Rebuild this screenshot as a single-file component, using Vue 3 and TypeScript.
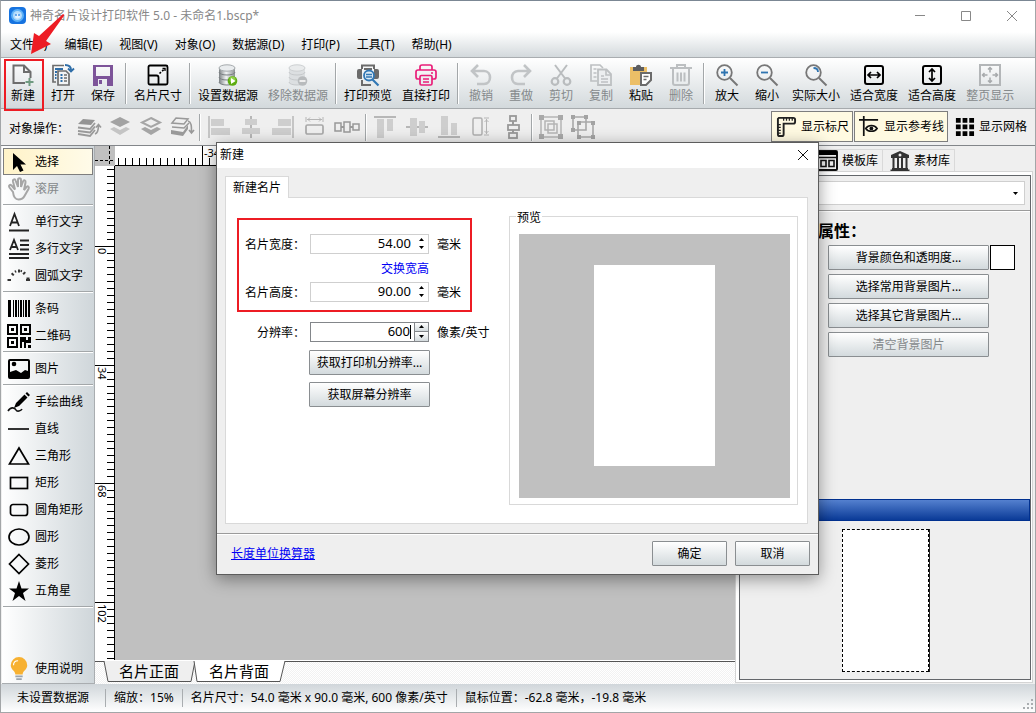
<script setup lang="ts">
import { computed, onBeforeUnmount, onMounted, ref } from 'vue'

interface Tool {
  label: string
  icon: string
  disabled?: boolean
}

const icons: Record<string, string> = {
  newDoc: '<path d="M13 19H1.500V1.500H12L18.500 8V14M12 1.500V8H18.500" fill="none" stroke="#6d6d6d" stroke-width="2"/><path d="M17.500 14v8M13.500 18h8" stroke="#6f9a80" stroke-width="2"/>',
  open: '<path d="M12 1.500H1V18h3" fill="none" stroke="#6d6d6d" stroke-width="1.700"/><path d="M3 5h8M3 8h2M3 11h1.500M3 14h1.500" stroke="#2f6ea8" stroke-width="2"/><path d="M6 7h8l3 3v11H6z" fill="#f2f4f5" stroke="#6d6d6d" stroke-width="1.700"/><path d="M8.500 11h2M8.500 14h2M8.500 17h2" stroke="#2f6ea8" stroke-width="2"/><path d="M12 11h3M12 14h3M12 17h3" stroke="#6d6d6d" stroke-width="1.500"/><path d="M13 1c4 0 6 1 6 5" fill="none" stroke="#2f6ea8" stroke-width="2"/><path d="M16 4.500l3 3 3-3" fill="none" stroke="#2f6ea8" stroke-width="1.800"/>',
  save: '<path fill-rule="evenodd" fill="#7d5499" d="M1 1h20v21H1zM4 3v9h14V3zM6 15v7h9v-7z"/><path fill="#7d5499" d="M7 16h3v4H7z"/>',
  size: '<path d="M3 1.500h16q1.500 0 1.500 1.500v16q0 1.500-1.500 1.500H3q-1.500 0-1.500-1.500V3q0-1.500 1.500-1.500zM2 11.500h7.500q2 0 2 2V20" fill="none" stroke="#000" stroke-width="1.800"/><path d="M12.500 9.500L18 4.500" stroke="#000" stroke-width="1.600" stroke-dasharray="2 1.500"/><path d="M15.500 4.500h2.500v2.500" fill="none" stroke="#000" stroke-width="1.300"/>',
  dbSet: '<defs><linearGradient id="dbg"><stop stop-color="#7b8083"/><stop offset=".45" stop-color="#f1f3f4"/><stop offset="1" stop-color="#8b9093"/></linearGradient></defs><path d="M2 4v14c0 4 16 4 16 0V4z" fill="url(#dbg)"/><path d="M2 8c0 4 16 4 16 0M2 13c0 4 16 4 16 0M2 18c0 4 16 4 16 0" fill="none" stroke="#7a8083"/><ellipse cx="10" cy="4" rx="8" ry="3.200" fill="#e9ecee" stroke="#a5aaad"/><circle cx="15.500" cy="17" r="4.800" fill="#5cac12"/><circle cx="15.500" cy="15.500" r="3" fill="#8fd048"/><path d="M14 14l4.500 3-4.500 3z" fill="#fff"/>',
  dbRemove: '<path d="M2 4v14c0 4 16 4 16 0V4z" fill="#dcdfe1"/><path d="M2 8c0 4 16 4 16 0M2 13c0 4 16 4 16 0M2 18c0 4 16 4 16 0" fill="none" stroke="#c6c9cb"/><ellipse cx="10" cy="4" rx="8" ry="3.200" fill="#e9ebec" stroke="#cdd0d2"/><circle cx="15.500" cy="17" r="4.800" fill="#b8bbbd"/><path d="M12.500 17h6" stroke="#eee" stroke-width="2"/>',
  preview: '<path d="M5 5V1.500h12V5M5 16v5h9" fill="none" stroke="#6b6b6b" stroke-width="2"/><path d="M7 5h8" stroke="#6b6b6b" stroke-width="2"/><path d="M2 5h3v10H2q-2 0-2-2V7q0-2 2-2zM17 5h3q2 0 2 2v6q0 2-2 2h-3z" fill="#6b6b6b"/><circle cx="12" cy="11.500" r="5" fill="#dcebf6" stroke="#3278b5" stroke-width="1.800"/><path d="M9 10.500h6M9 13h6" stroke="#3278b5" stroke-width="1.300"/><path d="M15.500 15.500L21.500 21.500" stroke="#3278b5" stroke-width="2.200"/>',
  print: '<path d="M5 6V3q0-2 2-2h8q2 0 2 2v3M5 15H3q-2 0-2-2V8q0-2 2-2h16q2 0 2 2v5q0 2-2 2h-2" fill="none" stroke="#e91e79" stroke-width="1.700"/><rect x="5" y="11.500" width="12" height="9.500" rx="1.500" fill="none" stroke="#e91e79" stroke-width="1.700"/><path d="M16 9h2M8 15h6M8 18h6" stroke="#e91e79" stroke-width="1.500"/>',
  undo: '<path d="M8 1L2 7l6 6M2.500 7H14c8 0 8 13 0 13H7" fill="none" stroke="#c1c4c6" stroke-width="2.600"/>',
  redo: '<path d="M14 1l6 6-6 6M19.500 7H8C0 7 0 20 8 20h7" fill="none" stroke="#c1c4c6" stroke-width="2.600"/>',
  cut: '<path d="M5 1l10.500 14M17 1L6.500 15" stroke="#b9bcbe" stroke-width="2"/><circle cx="5" cy="17.500" r="3.300" fill="none" stroke="#b9bcbe" stroke-width="2.200"/><circle cx="17" cy="17.500" r="3.300" fill="none" stroke="#b9bcbe" stroke-width="2.200"/>',
  copy: '<path d="M7 17H1V1h9l3 3M3.500 5h3M3.500 9h3M3.500 13h3" fill="none" stroke="#bdc0c2" stroke-width="1.700"/><path d="M8 5.500h8.500l4.500 4.500v11H8z" fill="#eceef0" stroke="#bdc0c2" stroke-width="1.800"/><path d="M16 6v5h5M11 12h3M11 15h7M11 18h7" fill="none" stroke="#bdc0c2" stroke-width="1.600"/>',
  paste: '<rect x="0" y="3" width="17" height="18" fill="#ecbf67"/><path d="M3 3h3c0-3 5-3 5 0h3v4H3z" fill="#5c5d60"/><path d="M11 9h10v7l-5 5h-5z" fill="#fff" stroke="#6b6b6b" stroke-width="2"/><path d="M13.500 12.500h5M13.500 15.500h3" stroke="#6b6b6b" stroke-width="1.500"/>',
  trash: '<path d="M0 4h22M7 4V1h8v3M3 5v14q0 2 2 2h12q2 0 2-2V5" fill="none" stroke="#bcbfc1" stroke-width="2"/><path d="M7.500 8.500v9M11 8.500v9M14.500 8.500v9" stroke="#bcbfc1" stroke-width="2"/>',
  zoomIn: '<circle cx="8.500" cy="8.500" r="7.300" fill="none" stroke="#777" stroke-width="1.800"/><path d="M14 14l7.500 7.500" stroke="#777" stroke-width="2"/><path d="M8.500 5v7M5 8.500h7" stroke="#2f74b0" stroke-width="1.800"/>',
  zoomOut: '<circle cx="8.500" cy="8.500" r="7.300" fill="none" stroke="#777" stroke-width="1.800"/><path d="M14 14l7.500 7.500" stroke="#777" stroke-width="2"/><path d="M5 8.500h7" stroke="#2f74b0" stroke-width="1.800"/>',
  actual: '<circle cx="8.500" cy="8.500" r="7.300" fill="none" stroke="#777" stroke-width="1.800"/><path d="M14 14l7.500 7.500" stroke="#777" stroke-width="2"/><path d="M8.500 4c3 0 4.500 2 4.500 4" fill="none" stroke="#2f74b0" stroke-width="1.800"/>',
  fitW: '<rect x="2" y="2" width="18" height="18" rx="2" fill="none" stroke="#000" stroke-width="2"/><path d="M5 11h12M8 8l-3 3 3 3M14 8l3 3-3 3" fill="none" stroke="#000" stroke-width="1.700"/>',
  fitH: '<rect x="2" y="2" width="18" height="18" rx="2" fill="none" stroke="#000" stroke-width="2"/><path d="M11 5v12M8 8l3-3 3 3M8 14l3 3 3-3" fill="none" stroke="#000" stroke-width="1.700"/>',
  fitPage: '<rect x="1" y="1" width="20" height="20" fill="none" stroke="#b3b6b8" stroke-width="2"/><path d="M11 3.500v5M11 13.500v5M3.500 11h5M13.500 11h5M9 5.500l2-2 2 2M9 16.500l2 2 2-2M5.500 9l-2 2 2 2M16.500 9l2 2-2 2" fill="none" stroke="#a7aaac" stroke-width="1.500"/>',
  toFront: '<path d="M0 8l5-5 12 1-4 5z" fill="#949494"/><path d="M0 11.500l12 1.500 5-6M0 15l12 1.500 5-6M0 18l12 2 5-6" fill="none" stroke="#999" stroke-width="1.800"/><path d="M17 18c3-1 3.500-4 3.500-9M18 11.500l2.500-3 2.500 3" fill="none" stroke="#999" stroke-width="1.600"/>',
  forward: '<path d="M11 1l10 5-10 5L1 6z" fill="#a2a2a2"/><path d="M1 13l4-2 6 3 6-3 4 2-10 6z" fill="#c4c4c4"/>',
  backward: '<path d="M11 2l9 4.500-9 4.500-9-4.500z" fill="none" stroke="#a5a5a5" stroke-width="2"/><path d="M1 13l4-2 6 3 6-3 4 2-10 6z" fill="#a5a5a5"/>',
  toBack: '<path d="M1 7l4-5 12 1-4 5zM1 11l12 1 5-5" fill="none" stroke="#999" stroke-width="1.500"/><path d="M0 14l12 2 5-7v4l-5 7-12-2z" fill="#999"/><path d="M17 5c3.500 1 3.500 5 3.500 11M18 14l2.500 3 2.500-3" fill="none" stroke="#999" stroke-width="1.600"/>',
  alLeft: '<path d="M1 0v22" stroke="#b7b7b7" stroke-width="1.500"/><path d="M3 3h13v7H3zM3 12h19v7H3z" fill="#cecece"/>',
  alCenter: '<path d="M11 0v22" stroke="#b7b7b7" stroke-width="2"/><path d="M5 3h12v6H5zM2 12h18v6H2z" fill="#cecece"/>',
  alRight: '<path d="M21 0v22" stroke="#b7b7b7" stroke-width="1.500"/><path d="M6 3h13v7H6zM0 12h19v7H0z" fill="#cecece"/>',
  sameW: '<rect x="2" y="9" width="17" height="9" rx="1.500" fill="none" stroke="#a9a9a9" stroke-width="1.700"/><path d="M2 1v5M19 1v5M3 3.500h15M6 1.500l-2 2 2 2M15 1.500l2 2-2 2" fill="none" stroke="#b5b5b5"/>',
  distH: '<path d="M0 11h22" stroke="#9a9a9a" stroke-width="2"/><g fill="#efefef" stroke="#999" stroke-width="1.500"><rect x="-1" y="7" width="6" height="8"/><rect x="8" y="6" width="6" height="10"/><rect x="17" y="8" width="6" height="6"/></g>',
  alTop: '<path d="M0 1h22" stroke="#b7b7b7" stroke-width="2"/><path d="M3 3h7v19H3zM13 3h6v12h-6z" fill="#cecece"/>',
  alMiddle: '<path d="M0 11h22" stroke="#b7b7b7" stroke-width="2"/><path d="M4 2h7v18H4zM13 5h6v12h-6z" fill="#cecece"/>',
  alBottom: '<path d="M0 21h22" stroke="#b7b7b7" stroke-width="2"/><path d="M3 0h7v19H3zM13 7h6v12h-6z" fill="#cecece"/>',
  sameH: '<rect x="3" y="2" width="9" height="17" rx="1.500" fill="none" stroke="#b0b0b0" stroke-width="1.500"/><path d="M14 2h5M14 19h5M16.500 3v15M14.500 6l2-2 2 2M14.500 15l2 2 2-2" fill="none" stroke="#b5b5b5"/>',
  distV: '<path d="M11 0v22" stroke="#9a9a9a" stroke-width="2"/><g fill="#efefef" stroke="#999" stroke-width="1.800"><rect x="8" y="0" width="6" height="5"/><rect x="6" y="9" width="11" height="5"/><rect x="7" y="17" width="8" height="5"/></g>',
  group: '<g fill="none" stroke="#b5b5b5" stroke-width="1.500"><path d="M1 1h20v20H1zM5 5h9v9H5zM8 8h9v9H8z"/></g><path d="M-1-1h5v5h-5zM18-1h5v5h-5zM-1 18h5v5h-5zM18 18h5v5h-5z" fill="#a9a9a9"/>',
  ungroup: '<g fill="none" stroke="#a9a9a9" stroke-width="1.600"><path d="M1 1h13v13H1zM6 6h15v15H6z"/></g><path d="M-1-1h4v4h-4zM12-1h4v4h-4zM-1 12h4v4h-4zM5 5h4v4H5zM19 5h4v4h-4zM5 19h4v4H5zM19 19h4v4h-4z" fill="#a3a3a3"/>',
  ruler: '<path d="M3 2h15q2 0 2 2v2q0 2-2 2H8v11q0 2-2 2H4q-2 0-2-2V3z" fill="none" stroke="#222" stroke-width="2"/><path d="M8 2v3M11 2v3M14 2v3M17 2v3M2 9h3M2 12h3M2 15h3M2 18h3" stroke="#222" stroke-width="1.300"/>',
  guides: '<path d="M0 4h20M5 0v21" stroke="#111" stroke-width="1.800"/><path d="M7 13c3-4 9-4 12 0-3 4-9 4-12 0z" fill="#fffbe6" stroke="#111" stroke-width="1.700"/><circle cx="13" cy="13" r="2" fill="#111"/>',
  grid: '<path d="M2 2h5v5H2zM9 2h5v5H9zM16 2h5v5h-5zM2 9h5v5H2zM9 9h5v5H9zM16 9h5v5h-5zM2 16h5v5H2zM9 16h5v5H9zM16 16h5v5h-5z"/>',
  select: '<path d="M5 2v17l4-4 3 6 3.500-1.500-3-6H18z"/>',
  hand: '<path d="M5 14L1.500 9.500C0 7 2.500 6 4 8l3 3.500-2-8C4.500 1 7 .5 7.800 3L10 9V2c0-2.500 3-2.500 3 0v7l2-5.500c.8-2 3-1.200 2.500 1L16 12l2.500-3c1.500-1.500 3 0 2 2l-4 7c-1 2-3 3.500-6 3.500-4 0-5-3-5.500-7.500z" fill="none" stroke="#a6a6a6" stroke-width="2"/>',
  text1: '<path d="M2 15L6.500 3 11 15M3.500 11.500h6M1 19.500h20" fill="none" stroke="#222" stroke-width="1.800"/>',
  text2: '<path d="M2 12L6 2l4 10M3.500 9h5M12 2.500h9M12 7h9M12 11.500h9M1 16h20M1 20h20" fill="none" stroke="#222" stroke-width="1.800"/>',
  arc: '<g fill="none" stroke="#333" stroke-width="3"><path d="M1 16v-3M4 10l2-2M10 6h2M15.500 7.500l2 2M20 12.500v3.500" stroke-dasharray="2 1"/><path d="M0 15h3M18 15h4" stroke-width="2"/><path d="M7 5.500l1 2M13.500 5l-.5 2" stroke-width="1.500"/></g>',
  barcode: '<path d="M0 2h3v17H0zM5 2h1v17H5zM7 2h2v17H7zM10 2h1v17h-1zM12 2h2v17h-2zM15 2h1v17h-1zM17 2h2v17h-2zM20 2h2v17h-2z"/>',
  qr: '<path fill-rule="evenodd" d="M-1-1h11v11H-1zM1 1v7h7V1zM3 3h3v3H3zM12-1h11v11H12zM14 1v7h7V1zM16 3h3v3h-3zM-1 12h11v11H-1zM1 14v7h7v-7zM3 16h3v3H3zM12 12h6v3h2v-3h3v6h-5v5h-2v-6h-2v6h-2zM20 20h3v3h-3z"/>',
  image: '<path fill-rule="evenodd" d="M2 1h18q2 0 2 2v16q0 2-2 2H2q-2 0-2-2V3q0-2 2-2zM2 3v11l6-2 5 3 4-3 3 1V3z"/><circle cx="6" cy="6" r="2.300"/>',
  pen: '<path d="M8 12L16.500 3.500l3 3L11 15l-5 2zM17.500 2.500L19 1l3 3-1.500 1.500z"/><path d="M0 20c3-5 7-3 8-1s5 1 6-1" fill="none" stroke="#111" stroke-width="1.600"/>',
  line: '<path d="M0 11h21" stroke="#333" stroke-width="2"/>',
  tri: '<path d="M11 3l9.500 16h-19z" fill="none" stroke="#000" stroke-width="1.700"/>',
  rect: '<rect x="2.500" y="5.500" width="17" height="11" fill="none" stroke="#000" stroke-width="1.700"/>',
  rrect: '<rect x="2.500" y="5.500" width="17" height="11" rx="2.500" fill="none" stroke="#000" stroke-width="1.700"/>',
  ellipse: '<ellipse cx="11" cy="11" rx="10" ry="8" fill="none" stroke="#000" stroke-width="1.700"/>',
  diamond: '<path d="M11 1.500l9.500 9.500-9.500 9.500L1.500 11z" fill="none" stroke="#000" stroke-width="1.700"/>',
  star: '<path d="M11 1l2.500 7.500H21l-6 4.500 2.500 8-6.500-5-6.500 5L7 13 1 8.500h7.500z"/>',
  bulb: '<path d="M7 18c0-4-5-5-5-10a9 9 0 0 1 18 0c0 5-5 6-5 10z" fill="#f7b132"/><path d="M5 8c0-3 2-5 5-5" fill="none" stroke="#fff" stroke-width="1.300"/><path d="M7 20h8M8 23h6" stroke="#9aa4ad" stroke-width="1.800"/>',
  template: '<rect x="0" y="1" width="20" height="19" rx="1" fill="none" stroke="#111" stroke-width="2"/><path d="M0 1h20v4H0z"/><path d="M1 7.500h18M4 10.500h5v6H4zM12 10.500h5v6h-5z" fill="none" stroke="#111" stroke-width="1.600"/>',
  bank: '<path d="M11 1l9 4v3H2V5zM3 18h16v1.500h1.500V21h-19v-1.500H3z" fill="#333"/><circle cx="11" cy="5" r="1.500" fill="#eee"/><path d="M4.500 8v10M9 8v10M13 8v10M17.500 8v10" stroke="#333" stroke-width="2"/>',
}

const menus = ['文件(F)', '编辑(E)', '视图(V)', '对象(O)', '数据源(D)', '打印(P)', '工具(T)', '帮助(H)']

const toolbar: Tool[][] = [
  [
    { label: '新建', icon: 'newDoc' },
    { label: '打开', icon: 'open' },
    { label: '保存', icon: 'save' },
  ],
  [{ label: '名片尺寸', icon: 'size' }],
  [
    { label: '设置数据源', icon: 'dbSet' },
    { label: '移除数据源', icon: 'dbRemove', disabled: true },
  ],
  [
    { label: '打印预览', icon: 'preview' },
    { label: '直接打印', icon: 'print' },
  ],
  [
    { label: '撤销', icon: 'undo', disabled: true },
    { label: '重做', icon: 'redo', disabled: true },
    { label: '剪切', icon: 'cut', disabled: true },
    { label: '复制', icon: 'copy', disabled: true },
    { label: '粘贴', icon: 'paste' },
    { label: '删除', icon: 'trash', disabled: true },
  ],
  [
    { label: '放大', icon: 'zoomIn' },
    { label: '缩小', icon: 'zoomOut' },
    { label: '实际大小', icon: 'actual' },
    { label: '适合宽度', icon: 'fitW' },
    { label: '适合高度', icon: 'fitH' },
    { label: '整页显示', icon: 'fitPage', disabled: true },
  ],
]

const objectTools: string[][] = [
  ['toFront', 'forward', 'backward', 'toBack'],
  ['alLeft', 'alCenter', 'alRight', 'sameW', 'distH'],
  ['alTop', 'alMiddle', 'alBottom', 'sameH', 'distV'],
  ['group', 'ungroup'],
]

const toggles = [
  { label: '显示标尺', icon: 'ruler', on: true },
  { label: '显示参考线', icon: 'guides', on: true },
  { label: '显示网格', icon: 'grid', on: false },
]

const sideGroups: Tool[][] = [
  [
    { label: '选择', icon: 'select' },
    { label: '滚屏', icon: 'hand', disabled: true },
  ],
  [
    { label: '单行文字', icon: 'text1' },
    { label: '多行文字', icon: 'text2' },
    { label: '圆弧文字', icon: 'arc' },
  ],
  [
    { label: '条码', icon: 'barcode' },
    { label: '二维码', icon: 'qr' },
  ],
  [{ label: '图片', icon: 'image' }],
  [
    { label: '手绘曲线', icon: 'pen' },
    { label: '直线', icon: 'line' },
    { label: '三角形', icon: 'tri' },
    { label: '矩形', icon: 'rect' },
    { label: '圆角矩形', icon: 'rrect' },
    { label: '圆形', icon: 'ellipse' },
    { label: '菱形', icon: 'diamond' },
    { label: '五角星', icon: 'star' },
  ],
]

const bgButtons = [
  { label: '选择常用背景图片...', disabled: false },
  { label: '选择其它背景图片...', disabled: false },
  { label: '清空背景图片', disabled: true },
]

/* Ruler ticks: a major tick every 34 mm, seventeen steps apart. */
const MAJOR = 118.6
function ticks(origin: number, first: number, length: number) {
  const out: { pos: number; major: boolean; label: string }[] = []
  for (let i = -17; ; i++) {
    const pos = Math.round(origin + (i * MAJOR) / 17)
    if (pos > length) break
    if (pos < 2) continue
    const major = i % 17 === 0
    out.push({ pos, major, label: major ? String(first + (i / 17) * 34) : '' })
  }
  return out
}

const viewW = ref(window.innerWidth)
const viewH = ref(window.innerHeight)
function measure() {
  viewW.value = window.innerWidth
  viewH.value = window.innerHeight
}
onMounted(() => window.addEventListener('resize', measure))
onBeforeUnmount(() => window.removeEventListener('resize', measure))

const hTicks = computed(() => ticks(87, -34, viewW.value - 420))
const vTicks = computed(() => ticks(80, 0, viewH.value - 220))

const activeTool = ref('选择')
const cardWidth = ref('54.00')
const cardHeight = ref('90.00')
const dpi = ref('600')

function swapSize() {
  const w = cardWidth.value
  cardWidth.value = cardHeight.value
  cardHeight.value = w
}
</script>

<template>
  <div class="window">
    <header class="titlebar">
      <svg class="logo" viewBox="0 0 17 17" aria-hidden="true">
        <rect width="17" height="17" rx="4" fill="#1673e0" />
        <circle cx="8.500" cy="8.500" r="6.500" fill="#5fb2f7" />
        <circle cx="8.500" cy="8.500" r="4.500" fill="#b5dcfc" />
        <circle cx="8.500" cy="9" r="2.500" fill="#e6f4ff" />
        <path d="M7 7v2M10 7v2" stroke="#1c7be4" stroke-width="1.200" />
      </svg>
      <h1>神奇名片设计打印软件 5.0 - 未命名1.bscp*</h1>
      <div class="winbtns">
        <button aria-label="最小化"><svg viewBox="0 0 12 12"><path d="M1 5.500h10" /></svg></button>
        <button aria-label="最大化"><svg viewBox="0 0 12 12"><path d="M1.500 1.500h9v9h-9z" /></svg></button>
        <button aria-label="关闭"><svg viewBox="0 0 12 12"><path d="M1 1l10 10M11 1L1 11" /></svg></button>
      </div>
    </header>

    <nav class="menubar">
      <button v-for="m in menus" :key="m">{{ m }}</button>
    </nav>

    <div class="toolbar">
      <template v-for="(g, gi) in toolbar" :key="gi">
        <span v-if="gi" class="sep"></span>
        <button v-for="t in g" :key="t.label" class="tool" :disabled="t.disabled">
          <svg viewBox="0 0 22 22" v-html="icons[t.icon]"></svg>
          <span>{{ t.label }}</span>
        </button>
      </template>
      <div class="new-mark"></div>
    </div>

    <div class="objbar">
      <span class="objlabel">对象操作：</span>
      <template v-for="(g, gi) in objectTools" :key="gi">
        <span v-if="gi" class="sep"></span>
        <button v-for="t in g" :key="t" class="otool" :class="{ narrow: gi === 0 }" :aria-label="t" disabled>
          <svg viewBox="0 0 22 22" v-html="icons[t]"></svg>
        </button>
      </template>
      <div class="toggles">
        <button v-for="t in toggles" :key="t.label" :class="{ on: t.on }" :aria-pressed="t.on">
          <svg viewBox="0 0 22 22" v-html="icons[t.icon]"></svg>{{ t.label }}
        </button>
      </div>
    </div>

    <main class="main">
      <aside class="side">
        <template v-for="(g, gi) in sideGroups" :key="gi">
          <button
            v-for="t in g"
            :key="t.label"
            :class="{ on: t.label === activeTool }"
            :disabled="t.disabled"
            @click="activeTool = t.label"
          >
            <svg viewBox="0 0 22 22" v-html="icons[t.icon]"></svg>{{ t.label }}
          </button>
          <hr />
        </template>
        <button class="help"><svg viewBox="0 0 22 24" v-html="icons.bulb"></svg>使用说明</button>
      </aside>

      <section class="work">
        <div class="corner"></div>
        <svg class="hruler" aria-hidden="true">
          <g v-for="t in hTicks" :key="t.pos">
            <rect :x="t.pos" :y="t.major ? 0 : 12" width="1" :height="t.major ? 19 : 7" />
            <text v-if="t.major" :x="t.pos + 2" y="11">{{ t.label }}</text>
          </g>
        </svg>
        <svg class="vruler" aria-hidden="true">
          <g v-for="t in vTicks" :key="t.pos">
            <rect :x="t.major ? 0 : 12" :y="t.pos" :width="t.major ? 19 : 7" height="1" />
            <text v-if="t.major" :transform="`translate(3 ${t.pos + 2}) rotate(90)`">{{ t.label }}</text>
          </g>
        </svg>
        <div class="canvas"></div>
        <div class="sheets">
          <button>
            <svg viewBox="0 0 92 22"><path d="M0 0L4 20.500H87L91 0" fill="#efefef" stroke="#555" /></svg>
            <span>名片正面</span>
          </button>
          <button>
            <svg viewBox="0 0 92 22"><path d="M0 0L3 20.500H86L91 0" fill="#fff" stroke="#555" /></svg>
            <span>名片背面</span>
          </button>
        </div>
      </section>

      <aside class="panel">
        <div class="ptabs">
          <button><svg viewBox="0 0 22 22" v-html="icons.template"></svg>模板库</button>
          <button><svg viewBox="0 0 22 22" v-html="icons.bank"></svg>素材库</button>
        </div>
        <div class="pouter">
          <div class="pinner">
            <div class="combo">
              <select aria-label="对象"><option></option></select>
              <svg viewBox="0 0 5 3"><path d="M0 0h5L2.500 3z" /></svg>
            </div>
            <div class="props">
              <h2>属性：</h2>
              <div class="bgrow">
                <button class="btn">背景颜色和透明度...</button>
                <button class="swatch" aria-label="背景颜色"></button>
              </div>
              <button v-for="b in bgButtons" :key="b.label" class="btn" :disabled="b.disabled">{{ b.label }}</button>
            </div>
            <div class="pbar"></div>
            <div class="thumb"><div class="card"></div></div>
          </div>
        </div>
      </aside>
    </main>

    <footer class="status">
      <span>未设置数据源</span>
      <span>缩放：15%</span>
      <span>名片尺寸：54.0 毫米 x 90.0 毫米, 600 像素/英寸</span>
      <span>鼠标位置：-62.8 毫米，-19.8 毫米</span>
      <svg class="grip" viewBox="0 0 10 10" aria-hidden="true">
        <path d="M8 0h2v2H8zM4 4h2v2H4zM8 4h2v2H8zM0 8h2v2H0zM4 8h2v2H4zM8 8h2v2H8z" fill="#a9adb0" />
      </svg>
    </footer>

    <div class="overlay">
      <div class="dialog" role="dialog" aria-labelledby="dlg-title">
        <div class="dtitle">
          <span id="dlg-title">新建</span>
          <button aria-label="关闭"><svg viewBox="0 0 12 12"><path d="M1 1l10 10M11 1L1 11" /></svg></button>
        </div>
        <div class="dbody">
          <button class="dtab">新建名片</button>
          <div class="dpanel">
            <form class="form" @submit.prevent>
              <div class="frame">
                <div class="row">
                  <label for="cw">名片宽度：</label>
                  <span class="spin">
                    <input id="cw" v-model="cardWidth" type="text" />
                    <svg viewBox="0 0 5 11"><path d="M0 3h5L2.500 0zM0 8h5L2.500 11z" /></svg>
                  </span>
                  <span class="unit">毫米</span>
                </div>
                <div class="swap"><a href="#" @click.prevent="swapSize">交换宽高</a></div>
                <div class="row">
                  <label for="ch">名片高度：</label>
                  <span class="spin">
                    <input id="ch" v-model="cardHeight" type="text" />
                    <svg viewBox="0 0 5 11"><path d="M0 3h5L2.500 0zM0 8h5L2.500 11z" /></svg>
                  </span>
                  <span class="unit">毫米</span>
                </div>
              </div>
              <div class="row res">
                <label for="dpi">分辨率：</label>
                <span class="spin active">
                  <input id="dpi" v-model="dpi" type="text" />
                  <span class="steps">
                    <button type="button" aria-label="增加"><svg viewBox="0 0 5 3"><path d="M0 3h5L2.500 0z" /></svg></button>
                    <button type="button" aria-label="减少"><svg viewBox="0 0 5 3"><path d="M0 0h5L2.500 3z" /></svg></button>
                  </span>
                </span>
                <span class="unit">像素/英寸</span>
              </div>
              <div class="fetch">
                <button type="button" class="btn">获取打印机分辨率...</button>
                <button type="button" class="btn">获取屏幕分辨率</button>
              </div>
            </form>
            <fieldset class="pv">
              <legend>预览</legend>
              <div class="stage"><div class="paper"></div></div>
            </fieldset>
          </div>
        </div>
        <div class="dfoot">
          <a href="#">长度单位换算器</a>
          <button class="btn">确定</button>
          <button class="btn">取消</button>
        </div>
      </div>
    </div>

    <svg class="arrow" viewBox="0 0 40 44" aria-hidden="true">
      <path d="M33 4l1.500 1L16 31l5 3L1 44 4 23l5 3z" fill="#ed1c24" />
    </svg>
  </div>
</template>

<style>
html,
body {
  margin: 0;
  background: #efefef;
}
</style>

<style scoped>
.window {
  position: relative;
  box-sizing: border-box;
  min-height: 100vh;
  display: flex;
  flex-direction: column;
  border: 1px solid #a3a6a8;
  border-top-color: #7b8794;
  background: #efefef;
  color: #000;
  font: 12px/16px "Noto Sans", "Noto Sans CJK SC", sans-serif;
  overflow: hidden;
}
.window *,
.window *::after {
  box-sizing: border-box;
}
button,
input,
select {
  font: inherit;
  color: inherit;
  margin: 0;
  padding: 0;
  border: 0;
  background: none;
  border-radius: 0;
  white-space: nowrap;
}
svg {
  display: block;
  flex: none;
  overflow: visible;
}
.titlebar {
  display: flex;
  align-items: center;
  height: 31px;
  padding: 0 0 2px 8px;
  background: #fff;
}
.logo {
  width: 17px;
  height: 17px;
}
h1 {
  margin: 0 auto 0 4px;
  font-size: 12px;
  font-weight: 400;
  color: #888;
}
.winbtns {
  display: flex;
}
.winbtns button {
  display: grid;
  place-items: center;
  width: 46px;
  height: 29px;
}
.winbtns svg,
.dtitle svg {
  width: 12px;
  height: 12px;
  fill: none;
  stroke: #888;
}
.menubar {
  display: flex;
  gap: 17px;
  height: 26px;
  padding: 0 9px;
  border-bottom: 1px solid #a9adb0;
  background: linear-gradient(#fff, #d3d9dc);
}
.toolbar {
  position: relative;
  display: flex;
  height: 51px;
  padding-left: 2px;
  border-bottom: 1px solid #a6aaad;
  background: linear-gradient(#fff, #d3d9dc);
}
.tool {
  display: flex;
  flex-direction: column;
  align-items: center;
  min-width: 40px;
  padding: 6px 5px 0;
  line-height: 20px;
}
.tool svg {
  width: 22px;
  height: 22px;
}
.tool:disabled {
  color: #85898b;
}
.sep {
  width: 6px;
  flex: none;
  margin: 5px 0 4px;
  background: linear-gradient(90deg, transparent 2px, #a3a7a9 2px, #a3a7a9 3px, #fff 3px, #fff 4px, transparent 4px);
}
.new-mark {
  position: absolute;
  left: 3px;
  top: 1px;
  width: 40px;
  height: 52px;
  border: 2px solid #ed1c24;
  pointer-events: none;
}
.objbar {
  display: flex;
  height: 37px;
  padding-left: 8px;
  border-bottom: 1px solid #83868a;
  background: #efefef;
}
.objlabel {
  width: 64px;
  line-height: 40px;
}
.otool {
  display: grid;
  justify-content: center;
  align-content: start;
  width: 32px;
  padding-top: 7px;
}
.otool.narrow {
  width: 31px;
}
.otool svg {
  width: 22px;
  height: 22px;
}
.toggles {
  display: flex;
  gap: 1px;
  margin-left: auto;
  padding: 2px 4px 3px 0;
}
.toggles button {
  display: flex;
  align-items: center;
  gap: 4px;
  padding: 0 3px 0 4px;
  border: 1px solid transparent;
}
.toggles button.on {
  border-color: #7e7e7e;
  background: #fffae2;
}
.toggles svg {
  width: 21px;
  height: 21px;
}
.main {
  flex: 1;
  display: flex;
  min-height: 500px;
}
.side {
  display: flex;
  flex-direction: column;
  width: 93px;
  flex: none;
  margin-left: 1px;
  padding: 2px 1px 0;
  border-right: 1px solid #a9adb0;
  border-bottom: 1px solid #a9adb0;
  background: linear-gradient(90deg, #fff, #cfd6da);
}
.side button {
  display: flex;
  align-items: center;
  gap: 5px;
  height: 27px;
  flex: none;
  padding-left: 4px;
  border: 1px solid transparent;
}
.side button.on {
  border-color: #7e7e7e;
  background: linear-gradient(90deg, #fff3c8, #fffbe9);
}
.side button:disabled {
  color: #85898b;
}
.side svg {
  width: 22px;
  height: 22px;
}
.side hr {
  width: 100%;
  height: 2px;
  margin: 2px 0;
  border: 0;
  border-top: 1px solid #a3a7a9;
  background: #fff;
}
.side .help {
  margin-top: auto;
  margin-bottom: 1px;
}
.work {
  flex: 1;
  display: grid;
  grid-template: 20px 1fr 24px / 20px 1fr;
  min-width: 0;
}
.corner {
  background:
    repeating-linear-gradient(90deg, #000 0 3px, transparent 3px 5px) 0 14px / 100% 1px no-repeat,
    repeating-linear-gradient(#000 0 3px, transparent 3px 5px) 14px 0 / 1px 100% no-repeat,
    #c0c0c0;
}
.hruler,
.vruler {
  width: 100%;
  height: 100%;
  overflow: hidden;
  background: #fff;
  font-size: 11px;
  min-height: 0;
}
.hruler {
  border-bottom: 1px solid #000;
}
.vruler {
  border-right: 1px solid #000;
}
.canvas {
  background: #c0c0c0;
}
.sheets {
  grid-column: 1 / -1;
  display: flex;
  padding-left: 9px;
  border-top: 1px solid #fff;
  background:
    linear-gradient(#555, #555) 0 0 / 100% 1px no-repeat,
    repeating-conic-gradient(#f2f2f2 0 25%, #fff 0 50%) 0 0 / 2px 2px;
}
.sheets button {
  position: relative;
  width: 90px;
  padding-bottom: 3px;
  font-size: 15px;
}
.sheets svg {
  position: absolute;
  left: 0;
  top: 0;
  width: 92px;
  height: 22px;
}
.sheets span {
  position: relative;
}
.panel {
  display: flex;
  flex-direction: column;
  width: 300px;
  flex: none;
  padding-right: 2px;
}
.ptabs {
  display: flex;
  height: 25px;
  padding: 3px 0 0 76px;
}
.ptabs button {
  display: flex;
  align-items: center;
  gap: 3px;
  padding: 0 4px 0 6px;
  border: 1px solid #d9d9d9;
  border-width: 1px 1px 0 0;
}
.ptabs svg {
  width: 22px;
  height: 22px;
}
.pouter {
  flex: 1;
  display: flex;
  padding: 3px 1px 2px 3px;
  margin-bottom: 1px;
  border: 1px solid #d4d4d4;
  background: #fff;
}
.pinner {
  flex: 1;
  display: flex;
  flex-direction: column;
  min-width: 0;
  border: 1px solid #63666a;
  background: #efefef;
}
.combo {
  position: relative;
  padding: 5px;
  border-bottom: 1px solid #9b9b9b;
  box-shadow: 0 1px #fff;
}
.combo select {
  display: block;
  appearance: none;
  width: 100%;
  height: 24px;
  border: 1px solid #cfcfcf;
  background: #fff;
}
.combo svg {
  position: absolute;
  right: 12px;
  top: 16px;
  width: 5px;
  height: 3px;
}
.props {
  flex: 1;
  display: flex;
  flex-direction: column;
  align-items: flex-start;
  gap: 4px;
  padding: 10px 0 0 88px;
}
h2 {
  margin: 0 0 0 -10px;
  font-size: 16px;
  line-height: 20px;
}
.bgrow {
  display: flex;
  gap: 1px;
}
.btn {
  width: 161px;
  height: 25px;
  padding-top: 1px;
  border: 1px solid #8a8e91;
  border-radius: 1px;
  background: linear-gradient(#fff, #d3dadd);
}
.btn:disabled {
  color: #85898b;
}
.swatch {
  width: 25px;
  height: 25px;
  border: 1px solid #000;
  background: #fff;
}
.pbar {
  height: 22px;
  border: 1px solid #00308f;
  background: linear-gradient(#5480cf, #0a3a97);
}
.thumb {
  display: grid;
  place-items: center;
  height: 158px;
}
.card {
  width: 87px;
  height: 143px;
  border: 1px dashed #000;
  background: #fff;
  box-shadow: 1px 0 #222;
}
.status {
  display: flex;
  align-items: center;
  height: 28px;
  padding-left: 8px;
  background: linear-gradient(#d0d6da, #fff);
}
.status span {
  padding: 1px 8px;
  border-right: 1px solid #a9adb0;
}
.status span:first-child {
  padding-right: 16px;
}
.status span:nth-child(4) {
  border: 0;
}
.grip {
  width: 10px;
  height: 10px;
  margin: auto 2px 3px auto;
}
.overlay {
  position: absolute;
  inset: 0;
  display: grid;
  place-items: center;
  padding: 3px 1px 0 0;
}
.dialog {
  display: flex;
  flex-direction: column;
  width: 603px;
  border: 1px solid #5c5c5c;
  background: #efefef;
  box-shadow: 0 4px 16px rgba(0, 0, 0, 0.4);
}
.dtitle {
  display: flex;
  justify-content: space-between;
  align-items: center;
  height: 25px;
  padding-left: 3px;
  background: #fff;
}
.dtitle button {
  display: grid;
  place-items: center;
  width: 30px;
  height: 25px;
}
.dtitle svg {
  stroke: #111;
}
.dbody {
  padding: 8px 10px 9px 8px;
}
.dtab {
  position: relative;
  display: block;
  width: 64px;
  height: 22px;
  margin-bottom: -1px;
  padding-top: 2px;
  border: 1px solid #d9d9d9;
  border-bottom: 0;
  background: #fff;
}
.dpanel {
  display: flex;
  justify-content: space-between;
  height: 327px;
  padding: 10px 9px 18px 11px;
  border: 1px solid #d9d9d9;
  background: #fff;
}
.form {
  padding-top: 10px;
}
.frame {
  width: 235px;
  padding: 14px 0 8px 6px;
  border: 2px solid #ed1c24;
}
.row {
  display: flex;
  align-items: center;
  height: 20px;
}
.row label,
.unit {
  padding-top: 3px;
}
.row label {
  width: 60px;
  margin-right: 5px;
  text-align: right;
}
.spin {
  position: relative;
  display: flex;
  align-items: center;
  width: 119px;
  height: 20px;
  margin-right: 8px;
  border: 1px solid #cfcfcf;
}
.spin input {
  flex: 1;
  min-width: 0;
  height: 18px;
  padding: 0 4px 2px 0;
  text-align: right;
  font-size: 13px;
  outline: 0;
}
.spin > svg {
  width: 5px;
  height: 11px;
  margin: 0 4px;
}
.spin.active {
  border-color: #83868a;
}
.spin.active::after {
  content: "";
  position: absolute;
  right: 17px;
  top: 2px;
  width: 1px;
  height: 14px;
  background: #000;
}
.steps {
  display: flex;
  flex-direction: column;
  width: 14px;
  height: 18px;
  border-left: 1px solid #83868a;
}
.steps button {
  flex: 1;
  display: grid;
  place-items: center;
  background: linear-gradient(#fff, #d3dadd);
}
.steps button + button {
  border-top: 1px solid #83868a;
}
.steps svg {
  width: 5px;
  height: 3px;
}
.swap {
  width: 184px;
  height: 28px;
  line-height: 30px;
  text-align: right;
}
a {
  color: #0000f5;
}
.swap a {
  text-decoration: none;
}
.res {
  margin: 10px 0 8px 8px;
}
.fetch {
  display: flex;
  flex-direction: column;
  gap: 7px;
  padding-left: 72px;
}
.fetch .btn {
  width: 121px;
}
.pv {
  display: flex;
  width: 289px;
  min-width: 0;
  margin: 0;
  padding: 8px 7px 6px 9px;
  border: 1px solid #d9d9d9;
}
legend {
  height: 18px;
  margin-left: -3px;
  padding: 2px 1px 0;
}
.stage {
  flex: 1;
  display: grid;
  place-items: center;
  background: #c0c0c0;
}
.paper {
  width: 121px;
  height: 201px;
  background: #fff;
}
.dfoot {
  display: flex;
  align-items: center;
  gap: 8px;
  height: 41px;
  padding: 0 8px 0 14px;
  border-top: 1px solid #9b9b9b;
  box-shadow: inset 0 1px #fff;
}
.dfoot a {
  margin-right: auto;
}
.dfoot .btn {
  width: 75px;
}
.arrow {
  position: absolute;
  left: 29px;
  top: 9px;
  width: 40px;
  height: 44px;
  pointer-events: none;
}
</style>
